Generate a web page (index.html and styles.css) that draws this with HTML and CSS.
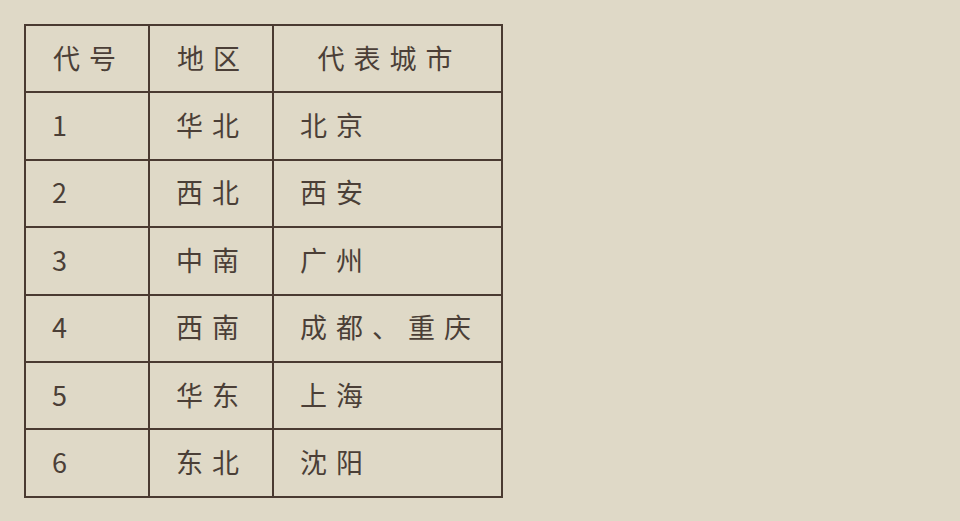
FILE: index.html
```html
<!DOCTYPE html>
<html lang="zh">
<head>
<meta charset="utf-8">
<link rel="stylesheet" href="styles.css">
</head>
<body>
<table class="regions">
  <colgroup>
    <col class="c1"><col class="c2"><col class="c3">
  </colgroup>
  <thead>
    <tr><th>代号</th><th>地区</th><th>代表城市</th></tr>
  </thead>
  <tbody>
    <tr><td>1</td><td>华北</td><td>北京</td></tr>
    <tr><td>2</td><td>西北</td><td>西安</td></tr>
    <tr><td>3</td><td>中南</td><td>广州</td></tr>
    <tr><td>4</td><td>西南</td><td>成都、重庆</td></tr>
    <tr><td>5</td><td>华东</td><td>上海</td></tr>
    <tr><td>6</td><td>东北</td><td>沈阳</td></tr>
  </tbody>
</table>
</body>
</html>
```
FILE: styles.css
```css
html, body {
  margin: 0;
  padding: 0;
  background: #dfd9c7;
}
body {
  padding: 24px 0 0 24px;
  font-family: "Noto Sans CJK SC", "Noto Sans", sans-serif;
  color: #4b3f37;
}
.regions {
  border-collapse: collapse;
  table-layout: fixed;
  width: 479px;
}
.c1 { width: 124px; }
.c2 { width: 124px; }
.c3 { width: 229px; }
.regions th,
.regions td {
  border: 2px solid #4a3a31;
  height: 62.4px;
  padding: 0 0 3px 26px;
  font-size: 27px;
  font-weight: 400;
  letter-spacing: 9px;
  line-height: 1;
  text-align: left;
  vertical-align: middle;
}
.regions th {
  text-align: center;
  padding: 0 0 3px 4px;
}
```
